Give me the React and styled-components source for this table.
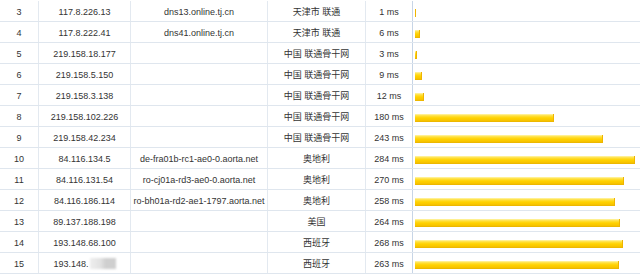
import styled, { createGlobalStyle } from 'styled-components';

const GlobalStyle = createGlobalStyle`
  html, body {
    margin: 0;
    padding: 0;
    background: #ffffff;
  }
  body {
    font-family: "Liberation Sans", "Noto Sans CJK SC", sans-serif;
  }
`;

const hops = [
  { no: 3, ip: '117.8.226.13', host: 'dns13.online.tj.cn', loc: '天津市 联通', ms: 1 },
  { no: 4, ip: '117.8.222.41', host: 'dns41.online.tj.cn', loc: '天津市 联通', ms: 6 },
  { no: 5, ip: '219.158.18.177', host: '', loc: '中国 联通骨干网', ms: 3 },
  { no: 6, ip: '219.158.5.150', host: '', loc: '中国 联通骨干网', ms: 9 },
  { no: 7, ip: '219.158.3.138', host: '', loc: '中国 联通骨干网', ms: 12 },
  { no: 8, ip: '219.158.102.226', host: '', loc: '中国 联通骨干网', ms: 180 },
  { no: 9, ip: '219.158.42.234', host: '', loc: '中国 联通骨干网', ms: 243 },
  { no: 10, ip: '84.116.134.5', host: 'de-fra01b-rc1-ae0-0.aorta.net', loc: '奥地利', ms: 284 },
  { no: 11, ip: '84.116.131.54', host: 'ro-cj01a-rd3-ae0-0.aorta.net', loc: '奥地利', ms: 270 },
  { no: 12, ip: '84.116.186.114', host: 'ro-bh01a-rd2-ae1-1797.aorta.net', loc: '奥地利', ms: 258 },
  { no: 13, ip: '89.137.188.198', host: '', loc: '美国', ms: 264 },
  { no: 14, ip: '193.148.68.100', host: '', loc: '西班牙', ms: 268 },
  { no: 15, ip: '193.148.', host: '', loc: '西班牙', ms: 263, masked: true },
];

const MAX_MS = 284;
const MAX_BAR = 220;

const Table = styled.div`
  display: flex;
  flex-direction: column;
  padding-top: 1px;
  width: 640px;
`;

const Row = styled.div`
  display: grid;
  grid-template-columns: 39px 92px 137px 98px 47px 1fr;
  height: 21px;
  box-sizing: border-box;
  border-bottom: 1px solid #dfe6ee;
`;

const Cell = styled.div`
  box-sizing: border-box;
  display: flex;
  align-items: center;
  justify-content: center;
  border-right: 1px solid ${(p) => (p.$axis ? '#c7d5e6' : '#e3e9f0')};
  font-size: 9px;
  color: #333333;
  white-space: nowrap;
  overflow: hidden;
  padding-top: 1px;
`;

const ChartCell = styled.div`
  display: flex;
  align-items: center;
  padding-left: 2px;
  padding-top: 3px;
`;

const Bar = styled.div`
  height: 8px;
  box-sizing: border-box;
  background: linear-gradient(
    to bottom,
    #fff6b0 0%,
    #ffe040 22%,
    #ffd200 50%,
    #f9c600 78%,
    #e8b200 100%
  );
  border-right: 1px solid #efb400;
`;

const Masked = styled.span`
  display: inline-block;
  width: 26px;
  height: 11px;
  margin-left: 1px;
  background: linear-gradient(to right, #eeeeee 0%, #e2e2e2 40%, #cfcfcf 60%, #cfcfcf 100%);
  filter: blur(1px);
`;

export default function App() {
  return (
    <>
      <GlobalStyle />
      <Table>
        {hops.map((h) => (
          <Row key={h.no}>
            <Cell>{h.no}</Cell>
            <Cell>
              {h.ip}
              {h.masked && <Masked />}
            </Cell>
            <Cell>{h.host}</Cell>
            <Cell>{h.loc}</Cell>
            <Cell $axis>{h.ms} ms</Cell>
            <ChartCell>
              <Bar style={{ width: `${Math.max(1, (h.ms / MAX_MS) * MAX_BAR)}px` }} />
            </ChartCell>
          </Row>
        ))}
      </Table>
    </>
  );
}
